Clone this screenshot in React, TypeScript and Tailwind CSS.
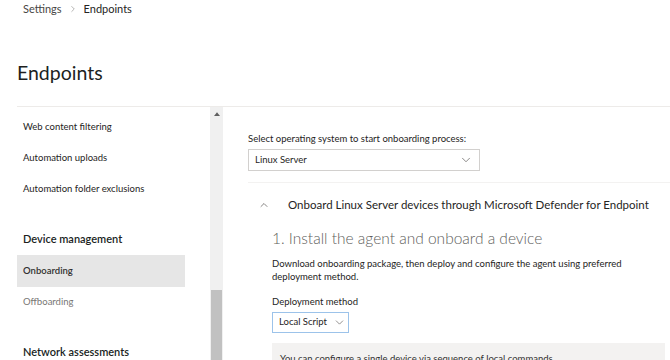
import { ChevronDown, ChevronRight, ChevronUp } from 'lucide-react'

const NAV_TOP = ['Web content filtering', 'Automation uploads', 'Automation folder exclusions']

export default function App() {
  return (
    <div className="w-[670px] h-[360px] overflow-hidden bg-white text-[#252423] font-['Lato',sans-serif]">
      {/* Breadcrumb */}
      <div className="flex items-center gap-[6px] pl-[23px] h-[18px] text-[11px]">
        <span className="text-[#484644]">Settings</span>
        <ChevronRight className="w-[10px] h-[10px] text-[#8a8886]" strokeWidth={1.5} />
        <span className="text-[#252423]">Endpoints</span>
      </div>

      <h1 className="pl-[17px] mt-[41px] h-[28px] leading-[28px] text-[19.5px] text-[#201f1e]">Endpoints</h1>

      <div className="ml-[17px] mt-[19px] border-t border-[#edebe9] flex h-[254px]">
        {/* Left nav */}
        <nav className="w-[168px] shrink-0 pt-[5px] text-[9.5px]">
          {NAV_TOP.map((item) => (
            <div key={item} className="h-[31px] flex items-center pl-[6px] whitespace-nowrap">{item}</div>
          ))}
          <div className="mt-[18px] h-[32px] flex items-center pl-[6px] text-[11px] font-semibold text-[#201f1e]">
            Device management
          </div>
          <div className="h-[32px] flex items-center pl-[6px] bg-[#e6e6e6] font-semibold text-[#323130]">
            Onboarding
          </div>
          <div className="h-[31px] flex items-center pl-[6px] text-[#797775]">Offboarding</div>
          <div className="mt-[18px] h-[32px] flex items-center pl-[6px] text-[11px] font-semibold text-[#201f1e]">
            Network assessments
          </div>
        </nav>

        {/* Scrollbar */}
        <div className="ml-[25px] w-[13px] shrink-0 bg-[#f0f0f0] flex flex-col items-center">
          <svg viewBox="0 0 8 5" className="w-[6px] h-[4px] mt-[5px]" fill="#606060">
            <path d="M0 5 L4 0 L8 5 Z" />
          </svg>
          <div className="mt-auto w-[11px] h-[70px] bg-[#c1c1c1]" />
        </div>

        {/* Content */}
        <div className="flex-1 min-w-0 overflow-hidden pl-[25px] pt-[24px] text-[9.5px] whitespace-nowrap">
          <p className="leading-[15px]">Select operating system to start onboarding process:</p>
          <div className="mt-[3px] w-[232px] h-[22px] border border-[#d2d0ce] flex items-center justify-between pl-[6px] pr-[6px]">
            <span>Linux Server</span>
            <ChevronDown className="w-[14px] h-[14px] text-[#605e5c]" strokeWidth={1.25} />
          </div>

          <div className="mt-[11px] border-t border-[#f3f2f1]">
            <div className="h-[44px] flex items-center">
              <ChevronUp className="w-[12px] h-[12px] ml-[10px] text-[#605e5c]" strokeWidth={1.5} />
              <span className="ml-[18px] text-[11.5px] text-[#252423]">
                Onboard Linux Server devices through Microsoft Defender for Endpoint
              </span>
            </div>

            <div className="pl-[24px]">
              <h2 className="mt-[1px] text-[15.5px] leading-[20px] font-light text-[#605e5c]">
                1. Install the agent and onboard a device
              </h2>
              <p className="mt-[9px] leading-[13px] w-[362px] whitespace-normal">
                Download onboarding package, then deploy and configure the agent using preferred deployment method.
              </p>
              <p className="mt-[11px] leading-[15px]">Deployment method</p>
              <div className="mt-[3px] w-[77px] h-[21px] border border-[#9cc3ea] flex items-center gap-[6px] pl-[6px]">
                <span>Local Script</span>
                <ChevronDown className="w-[13px] h-[13px] text-[#605e5c]" strokeWidth={1.25} />
              </div>
              <div className="mt-[10px] mr-[5px] bg-[#f3f2f1] h-[40px] pl-[8px] pt-[9px] text-[#323130]">
                You can configure a single device via sequence of local commands
              </div>
            </div>
          </div>
        </div>
      </div>
    </div>
  )
}
